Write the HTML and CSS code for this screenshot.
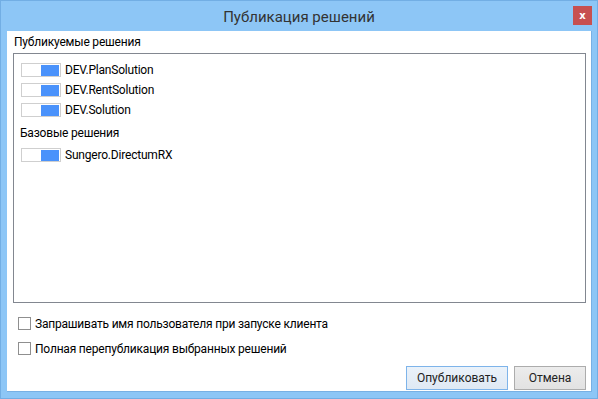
FILE: index.html
```html
<!DOCTYPE html>
<html lang="ru">
<head>
  <meta charset="UTF-8" />
  <title>Публикация решений</title>
  <link rel="stylesheet" href="styles.css">
</head>
<body>
  <div class="window">
    <div class="titlebar">
      <span class="title">Публикация решений</span>
      <button class="close-btn">x</button>
    </div>

    <div class="content">
      <div class="group-label">Публикуемые решения</div>

      <div class="solutions-box">
        <div class="row">
          <span class="toggle"><span class="knob"></span></span>
          <span class="row-text">DEV.PlanSolution</span>
        </div>
        <div class="row">
          <span class="toggle"><span class="knob"></span></span>
          <span class="row-text">DEV.RentSolution</span>
        </div>
        <div class="row">
          <span class="toggle"><span class="knob"></span></span>
          <span class="row-text">DEV.Solution</span>
        </div>

        <div class="section-head">Базовые решения</div>

        <div class="row">
          <span class="toggle"><span class="knob"></span></span>
          <span class="row-text">Sungero.DirectumRX</span>
        </div>
      </div>

      <label class="check">
        <span class="check-box"></span>
        Запрашивать имя пользователя при запуске клиента
      </label>
      <label class="check">
        <span class="check-box"></span>
        Полная перепубликация выбранных решений
      </label>

      <div class="button-group">
        <button class="btn btn-default">Опубликовать</button>
        <button class="btn btn-cancel">Отмена</button>
      </div>
    </div>
  </div>
</body>
</html>
```

FILE: styles.css
```css
* {
  box-sizing: border-box;
}

body {
  margin: 0;
  font-family: Roboto, 'Noto Sans', sans-serif;
  font-size: 12px;
  letter-spacing: -0.2px;
  color: #000;
  background: #fff;
}

.window {
  width: 598px;
  height: 399px;
  background: #8dc6f6;
  border: 1px solid #72aee4;
  display: flex;
  flex-direction: column;
}

.titlebar {
  height: 30px;
  display: flex;
  align-items: center;
  justify-content: center;
  position: relative;
}

.title {
  font-size: 15px;
  letter-spacing: 0;
  color: #333;
  margin-top: 1px;
}

.close-btn {
  position: absolute;
  top: 5px;
  right: 5px;
  width: 19px;
  height: 19px;
  border: none;
  padding: 0;
  background: #c75050;
  color: #fff;
  font-family: 'DejaVu Sans', sans-serif;
  font-weight: bold;
  font-size: 10px;
  line-height: 17px;
}

.content {
  flex: 1;
  margin: 0 5px 6px 6px;
  background: #fff;
  border-right: 1px solid #78b0e4;
  border-bottom: 1px solid #78b0e4;
  padding: 3px 5px 0 6px;
  display: flex;
  flex-direction: column;
}

.group-label {
  height: 19px;
  line-height: 16px;
  padding-left: 1px;
}

.solutions-box {
  height: 250px;
  border: 1px solid #828790;
  padding: 6px 0 0 7px;
  margin-bottom: 8px;
}

.row {
  height: 20px;
  display: flex;
  align-items: center;
  gap: 4px;
}

.toggle {
  width: 40px;
  height: 14px;
  border: 1px solid #cfcfcf;
  background: #fff;
  display: flex;
  justify-content: flex-end;
  align-items: center;
  padding: 1px;
}

.knob {
  width: 18px;
  height: 11px;
  background: #4a92fb;
}

.row-text {
  line-height: 16px;
}

.section-head {
  height: 25px;
  line-height: 16px;
  padding-top: 5px;
  margin-left: -1px;
}

.check {
  height: 25px;
  display: flex;
  align-items: center;
  gap: 4px;
  padding-left: 5px;
}

.check-box {
  width: 13px;
  height: 13px;
  border: 1px solid #8f8f8f;
  background: #fff;
}

.button-group {
  display: flex;
  justify-content: flex-end;
  gap: 6px;
  margin-top: 5px;
}

.btn {
  height: 24px;
  font-family: inherit;
  font-size: 12px;
  color: #222;
  padding: 0;
  border: 1px solid #acacac;
  background: linear-gradient(#ececec, #e2e2e2);
}

.btn-default {
  width: 102px;
  border-color: #7eb4ea;
  background: linear-gradient(#eaf2fa, #dfe9f4);
}

.btn-cancel {
  width: 72px;
}
```
